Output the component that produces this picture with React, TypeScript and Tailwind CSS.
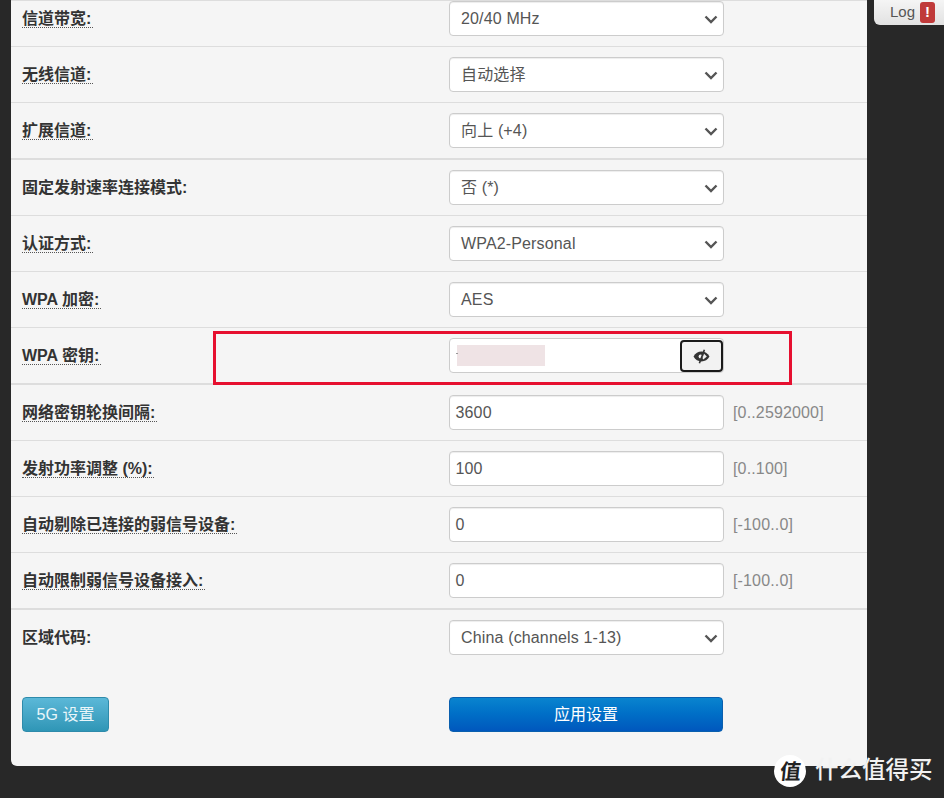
import React from "react";

function Chevron() {
  return (
    <svg className="absolute right-[5px] top-1/2 -translate-y-1/2" width="14" height="14" viewBox="0 0 14 14" fill="none">
      <path d="M1.5 4.5 L7 10 L12.5 4.5" stroke="#555555" strokeWidth="2.4" />
    </svg>
  );
}

function Select({ value }: { value: string }) {
  return (
    <div className="relative flex h-[35px] w-[275px] items-center rounded-[4px] border border-[#cccccc] bg-white pl-[11px] text-[16px] tracking-[0.15px] text-[#555555] shadow-[inset_0_1px_1px_rgba(0,0,0,0.075)]">
      {value}
      <Chevron />
    </div>
  );
}

function Input({ value }: { value: string }) {
  return (
    <div className="flex h-[35px] w-[275px] items-center rounded-[4px] border border-[#cccccc] bg-white pl-[5.5px] text-[16px] tracking-[0.15px] text-[#555555] shadow-[inset_0_1px_1px_rgba(0,0,0,0.075)]">
      {value}
    </div>
  );
}

function Label({ text, dotted }: { text: string; dotted?: boolean }) {
  return (
    <div className="w-[438px] shrink-0 pl-[11px] text-[16px] font-bold text-[#333333]">
      <span className={dotted ? "border-b border-dotted border-[#555555] pr-[1.5px]" : "pr-[1.5px]"}>{text}</span>
    </div>
  );
}

function Row({ label, dotted, thick, first, last, children }: { label: string; dotted?: boolean; thick?: boolean; first?: boolean; last?: boolean; children: React.ReactNode }) {
  return (
    <div
      className={
        "flex items-center " +
        (first ? "h-[46px] pb-[10px] " : last ? "h-[55px] " : thick ? "h-[57px] " : "h-[56px] ") +
        (last ? "" : thick ? "border-b-2 border-[#dddddd]" : "border-b border-[#dddddd]")
      }
    >
      <Label text={label} dotted={dotted} />
      {children}
    </div>
  );
}

function Hint({ text }: { text: string }) {
  return <span className="ml-[9px] text-[16px] tracking-[0.15px] text-[#888888]">{text}</span>;
}

export default function App() {
  return (
    <div
      className="relative h-[798px] w-[944px] overflow-hidden bg-[#282828] pl-[11px]"
      style={{ fontFamily: '"Liberation Sans", "Noto Sans CJK SC", sans-serif' }}
    >
      <div className="h-[766px] w-[856px] rounded-b-[6px] border-t border-[#dddddd] bg-[#f5f5f5]">
        <Row first label="信道带宽:" dotted><Select value="20/40 MHz" /></Row>
        <Row label="无线信道:" dotted><Select value="自动选择" /></Row>
        <Row thick label="扩展信道:" dotted><Select value="向上 (+4)" /></Row>
        <Row label="固定发射速率连接模式:"><Select value="否 (*)" /></Row>
        <Row label="认证方式:" dotted><Select value="WPA2-Personal" /></Row>
        <Row label="WPA 加密:" dotted><Select value="AES" /></Row>
        <Row thick label="WPA 密钥:" dotted>
          <div className="relative flex h-[35px] w-[275px] items-center rounded-[4px] border border-[#cccccc] bg-white">
            <div className="ml-[7px] h-[21px] w-[88px] bg-[#efe3e5]" />
            <div className="absolute left-[6px] top-[14px] h-px w-[2px] bg-[#999999]" />
            <button className="absolute right-0 top-px flex h-[32px] w-[43px] items-center justify-center rounded-[4px] border-2 border-[#1a1a1a] bg-[#f2f2f2]">
              <svg width="17" height="15" viewBox="0 0 17 15">
                <path d="M0.5 7.5 C2.5 4.2 5 2.6 8.5 2.6 C12 2.6 14.5 4.2 16.5 7.5 C14.5 10.8 12 12.4 8.5 12.4 C5 12.4 2.5 10.8 0.5 7.5 Z" fill="#333333" />
                <circle cx="7.6" cy="7.5" r="2" fill="#f2f2f2" />
                <path d="M10.8 4.6 L13.8 7.5 L10.4 10.6 L9.6 9.5 Z" fill="#f2f2f2" />
                <path d="M11.4 0.8 L6.4 14.2" stroke="#333333" strokeWidth="1.6" />
              </svg>
            </button>
          </div>
        </Row>
        <Row label="网络密钥轮换间隔:" dotted><Input value="3600" /><Hint text="[0..2592000]" /></Row>
        <Row label="发射功率调整 (%):" dotted><Input value="100" /><Hint text="[0..100]" /></Row>
        <Row label="自动剔除已连接的弱信号设备:" dotted><Input value="0" /><Hint text="[-100..0]" /></Row>
        <Row thick label="自动限制弱信号设备接入:" dotted><Input value="0" /><Hint text="[-100..0]" /></Row>
        <Row last label="区域代码:"><Select value="China (channels 1-13)" /></Row>
        <div className="flex pt-[32px]">
          <div className="w-[438px] shrink-0 pl-[11px]">
            <button className="h-[35px] w-[87px] rounded-[4px] border border-[#2e8bab] bg-gradient-to-b from-[#5bb8d8] to-[#2f96b6] text-[16px] text-[#eaf6fa]">
              5G 设置
            </button>
          </div>
          <button className="h-[35px] w-[274px] rounded-[4px] border border-[#0a5fae] bg-gradient-to-b from-[#0a84cf] to-[#0057bd] text-[16px] text-white">
            应用设置
          </button>
        </div>
      </div>

      <div className="absolute right-0 top-0 flex h-[25px] w-[70px] items-center rounded-bl-[6px] bg-gradient-to-b from-[#f5f5f5] to-[#e2e2e2] pl-[16px] text-[15px] text-[#555555]">
        Log
        <span className="ml-[5px] flex h-[21px] w-[15px] items-center justify-center rounded-[3px] bg-[#c03a3a] text-[15px] font-bold text-white">!</span>
      </div>

      <div className="absolute left-[213px] top-[331px] h-[54px] w-[579px] border-[3px] border-[#e60f2f]" />

      <div className="absolute left-[774px] top-[755px] flex items-center">
        <div className="flex h-[32px] w-[32px] items-center justify-center rounded-full bg-white text-[21px] font-bold leading-none text-[#222222]">
          <span className="-skew-x-6">值</span>
        </div>
        <span className="ml-[9px] text-[23.5px] font-medium leading-none text-[#f2f2f2]">什么值得买</span>
      </div>
    </div>
  );
}
